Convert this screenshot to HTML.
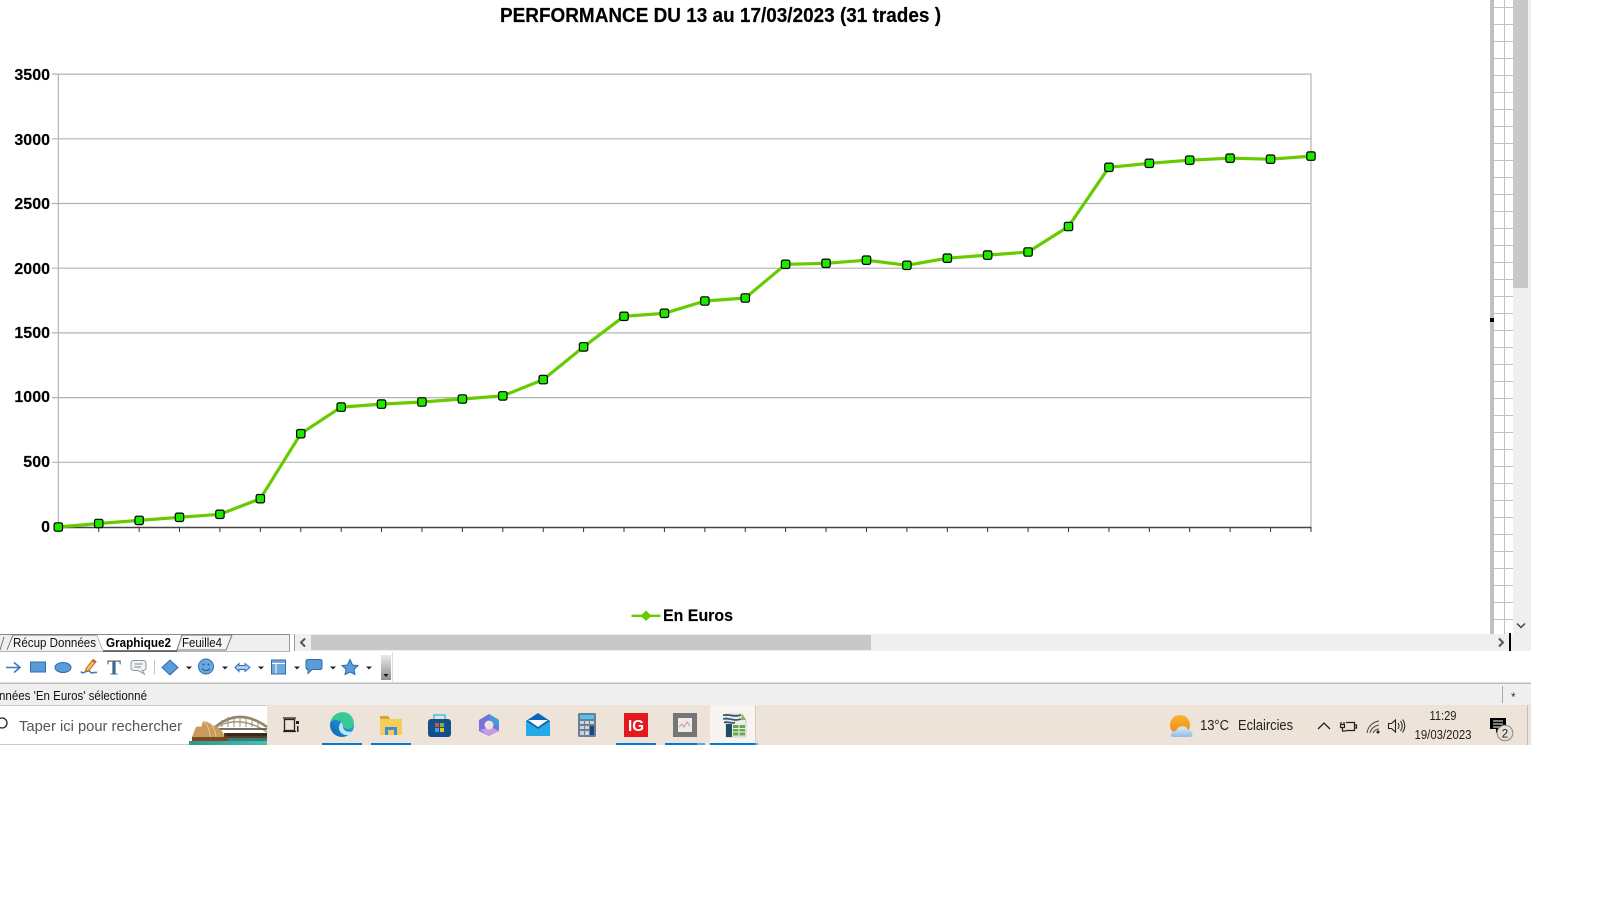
<!DOCTYPE html>
<html lang="fr">
<head>
<meta charset="utf-8">
<title>Performance</title>
<style>
html,body{margin:0;padding:0;background:#fff;width:1600px;height:900px;overflow:hidden}
svg{display:block}
text{font-family:"Liberation Sans",sans-serif}
</style>
</head>
<body>
<svg width="1600" height="900" viewBox="0 0 1600 900" xmlns="http://www.w3.org/2000/svg">
<defs>
<rect id="m" x="-4.2" y="-4.2" width="8.4" height="8.4" rx="1.8" fill="#1ee800" stroke="#000" stroke-width="1.2"/>
<linearGradient id="gg" x1="0" y1="0" x2="0" y2="1"><stop offset="0" stop-color="#e8e8e8"/><stop offset="1" stop-color="#8f8f8f"/></linearGradient>
<linearGradient id="sun" x1="0" y1="0" x2="0" y2="1"><stop offset="0" stop-color="#f9b52a"/><stop offset="1" stop-color="#f0851f"/></linearGradient>
<linearGradient id="cl" x1="0" y1="0" x2="0" y2="1"><stop offset="0" stop-color="#dcecf8"/><stop offset="1" stop-color="#8fbde6"/></linearGradient>
<linearGradient id="ed" x1="0" y1="1" x2="1" y2="0"><stop offset="0" stop-color="#0f5fb5"/><stop offset="1" stop-color="#2fb6e8"/></linearGradient>
<linearGradient id="wat" x1="0" y1="0" x2="1" y2="0"><stop offset="0" stop-color="#2a9a8c"/><stop offset="1" stop-color="#52b8b0"/></linearGradient>
</defs>
<rect width="1600" height="900" fill="#fff"/>

<!-- title -->
<text x="500" y="22" font-size="20" font-weight="bold" fill="#000" stroke="#000" stroke-width=".2" textLength="441" lengthAdjust="spacingAndGlyphs">PERFORMANCE DU 13 au 17/03/2023 (31 trades )</text>

<g transform="translate(58.3 0) scale(1.0007 1) translate(-58.3 0)">
<!-- grid -->
<g stroke="#b3b3b3" stroke-width="1.2" fill="none">
<path d="M58.3 74.1H1310.1V527M58.3 138.8H1310.1M58.3 203.5H1310.1M58.3 268.2H1310.1M58.3 332.9H1310.1M58.3 397.6H1310.1M58.3 462.3H1310.1M58.3 74.1V527"/>
<path d="M52 74.1H58M52 138.8H58M52 203.5H58M52 268.2H58M52 332.9H58M52 397.6H58M52 462.3H58"/>
</g>
<path d="M58 527.5H1310.5" stroke="#444" stroke-width="1.6"/>
<path d="M58.3 527V532M98.7 527V532M139.1 527V532M179.4 527V532M219.8 527V532M260.2 527V532M300.6 527V532M341 527V532M381.3 527V532M421.7 527V532M462.1 527V532M502.5 527V532M542.9 527V532M583.2 527V532M623.6 527V532M664 527V532M704.4 527V532M744.8 527V532M785.1 527V532M825.5 527V532M865.9 527V532M906.3 527V532M946.7 527V532M987 527V532M1027.4 527V532M1067.8 527V532M1108.2 527V532M1148.6 527V532M1188.9 527V532M1229.3 527V532M1269.7 527V532M1310.1 527V532" stroke="#333" stroke-width="1"/>
<!-- series -->
<polyline fill="none" stroke="#66cc00" stroke-width="3.2" stroke-linejoin="round" points="58.3,527 98.7,523.5 139.1,520.4 179.4,517.3 219.8,514.3 260.2,498.7 300.6,433.7 341,407.1 381.3,404.1 421.7,402 462.1,399 502.5,395.9 542.9,379.6 583.2,346.9 623.6,316.3 664,313.3 704.4,301 744.8,298 785.1,264.3 825.5,263.3 865.9,260.2 906.3,265.3 946.7,258.2 987,255.1 1027.4,252 1067.8,226.5 1108.2,167.3 1148.6,163.3 1188.9,160.2 1229.3,158.2 1269.7,159.2 1310.1,156.1"/>
<g>
<use href="#m" x="58.3" y="527"/><use href="#m" x="98.7" y="523.5"/><use href="#m" x="139.1" y="520.4"/><use href="#m" x="179.4" y="517.3"/><use href="#m" x="219.8" y="514.3"/><use href="#m" x="260.2" y="498.7"/><use href="#m" x="300.6" y="433.7"/><use href="#m" x="341" y="407.1"/><use href="#m" x="381.3" y="404.1"/><use href="#m" x="421.7" y="402"/><use href="#m" x="462.1" y="399"/><use href="#m" x="502.5" y="395.9"/><use href="#m" x="542.9" y="379.6"/><use href="#m" x="583.2" y="346.9"/><use href="#m" x="623.6" y="316.3"/><use href="#m" x="664" y="313.3"/><use href="#m" x="704.4" y="301"/><use href="#m" x="744.8" y="298"/><use href="#m" x="785.1" y="264.3"/><use href="#m" x="825.5" y="263.3"/><use href="#m" x="865.9" y="260.2"/><use href="#m" x="906.3" y="265.3"/><use href="#m" x="946.7" y="258.2"/><use href="#m" x="987" y="255.1"/><use href="#m" x="1027.4" y="252"/><use href="#m" x="1067.8" y="226.5"/><use href="#m" x="1108.2" y="167.3"/><use href="#m" x="1148.6" y="163.3"/><use href="#m" x="1188.9" y="160.2"/><use href="#m" x="1229.3" y="158.2"/><use href="#m" x="1269.7" y="159.2"/><use href="#m" x="1310.1" y="156.1"/>
</g>
</g>

<!-- y labels -->
<g font-size="16" font-weight="bold" fill="#000" stroke="#000" stroke-width=".15" text-anchor="end">
<text x="50" y="80">3500</text>
<text x="50" y="145">3000</text>
<text x="50" y="209">2500</text>
<text x="50" y="274">2000</text>
<text x="50" y="338">1500</text>
<text x="50" y="402">1000</text>
<text x="50" y="467">500</text>
<text x="50" y="532">0</text>
</g>

<!-- legend -->
<path d="M631.5 615.8H660.5" stroke="#66cc00" stroke-width="2.4"/>
<path d="M646 610.5L651.5 615.8L646 621L640.5 615.8Z" fill="#66cc00"/>
<text x="663" y="621" font-size="16.5" font-weight="bold" fill="#000" stroke="#000" stroke-width=".15" textLength="70" lengthAdjust="spacingAndGlyphs">En Euros</text>

<!-- right grid -->
<rect x="1490" y="0" width="4" height="634" fill="#c0c0c0"/>
<rect x="1490" y="318" width="4" height="4" fill="#000"/>
<path d="M1504.5 0V634" stroke="#c0c0c0"/>
<path stroke="#c0c0c0" d="M1494 7.5H1513M1494 24.5H1513M1494 41.5H1513M1494 58.5H1513M1494 75.5H1513M1494 92.5H1513M1494 109.5H1513M1494 126.5H1513M1494 143.5H1513M1494 160.5H1513M1494 177.5H1513M1494 194.5H1513M1494 211.5H1513M1494 228.5H1513M1494 245.5H1513M1494 262.5H1513M1494 279.5H1513M1494 296.5H1513M1494 313.5H1513M1494 330.5H1513M1494 347.5H1513M1494 364.5H1513M1494 381.5H1513M1494 398.5H1513M1494 415.5H1513M1494 432.5H1513M1494 449.5H1513M1494 466.5H1513M1494 483.5H1513M1494 500.5H1513M1494 517.5H1513M1494 534.5H1513M1494 551.5H1513M1494 568.5H1513M1494 585.5H1513M1494 602.5H1513M1494 619.5H1513"/>

<!-- v scrollbar -->
<rect x="1513" y="0" width="18" height="634" fill="#efefef"/>
<rect x="1513" y="0" width="15" height="288" fill="#c8c8c8"/>
<path d="M1517 623.5L1521 627.5L1525 623.5" fill="none" stroke="#444" stroke-width="1.5"/>

<!-- sheet tab bar -->
<rect x="0" y="634" width="1531" height="17" fill="#efefef"/>
<path d="M0 651.5H290" stroke="#b5b5b5"/>
<path d="M0 634.5H289" stroke="#8a8a8a"/>
<path d="M289.5 634V651M294.5 634V651" stroke="#999"/>
<rect x="290" y="635" width="4" height="16" fill="#fff"/>
<!-- tabs -->
<path d="M0 650L4 637" fill="none" stroke="#777"/>
<path d="M7 650L13 635H97L103 650" fill="#f4f4f4" stroke="#777"/>
<path d="M97 635L103 650H176L181 635" fill="#fff" stroke="none"/>
<path d="M103 651H177" stroke="#333" stroke-width="1.2"/>
<path d="M177 650L182 635H232L226 650Z" fill="#f4f4f4" stroke="#777"/>
<text x="13" y="647" font-size="12.5" fill="#111" textLength="83" lengthAdjust="spacingAndGlyphs">Récup Données</text>
<text x="106" y="647" font-size="12.5" font-weight="bold" fill="#000" textLength="65" lengthAdjust="spacingAndGlyphs">Graphique2</text>
<text x="182" y="647" font-size="12.5" fill="#111" textLength="40" lengthAdjust="spacingAndGlyphs">Feuille4</text>
<path d="M305 638.5L301 642.5L305 646.5" fill="none" stroke="#555" stroke-width="2"/>
<rect x="311" y="635" width="560" height="15" fill="#c8c8c8"/>
<path d="M1499 638.5L1503 642.5L1499 646.5" fill="none" stroke="#555" stroke-width="2"/>
<rect x="1509" y="633" width="2" height="18" fill="#000"/>

<!-- drawing toolbar -->
<rect x="0" y="652" width="1531" height="31" fill="#fff"/>
<path d="M0 683.5H1531" stroke="#bdbdbd" stroke-width="2"/>
<g transform="translate(0 -.5)">
<g stroke="#3b78c0" fill="#6fa8dc" stroke-width="1">
<path d="M6 668H19M14 663L20 668L14 673" fill="none" stroke-width="1.6"/>
<rect x="30.5" y="662.5" width="15" height="10" fill="#5b9bd8" stroke="#2f6cb0"/>
<ellipse cx="63" cy="668" rx="8" ry="5" fill="#5b9bd8" stroke="#2f6cb0"/>
<path d="M81 672C83 676 88 669 90 672C91 675 94 672 97 673" fill="none" stroke-width="1.5"/>
<path d="M86 669L93 660L96 662L89 671L85.5 672Z" fill="#f2c14e" stroke="#b5651d"/>
<path d="M92.5 661L95.5 663" stroke="#d9534f" stroke-width="2"/>
<path d="M162 668L170 660.500L178 668L170 675.500Z" fill="#5b9bd8" stroke="#2f6cb0"/>
<circle cx="206" cy="667" r="7.5" fill="#6fa8dc" stroke="#2f6cb0"/>
<path d="M202 669Q206 673 210 669" fill="none" stroke="#1f5a9e"/>
<circle cx="203.500" cy="665" r="1" fill="#1f5a9e" stroke="none"/><circle cx="208.500" cy="665" r="1" fill="#1f5a9e" stroke="none"/>
<path d="M235 668L239 664V666H245V664L250 668L245 672V670H239V672Z" fill="#a8cdf0" stroke="#2f6cb0"/>
<rect x="271.5" y="660.5" width="14" height="14" fill="#6fa8dc" stroke="#2f6cb0"/>
<path d="M272 664H285M276 664V674" stroke="#fff" fill="none"/>
<path d="M308 660H320Q322 660 322 662V668Q322 670 320 670H312L308 674V670Q306 670 306 668V662Q306 660 308 660Z" fill="#5b9bd8" stroke="#2f6cb0"/>
<path d="M350 660L352.5 665.5L358 666L354 670L355 675L350 672.5L345 675L346 670L342 666L347.500 665.500Z" fill="#5b9bd8" stroke="#2f6cb0"/>
</g>
<text x="107" y="675" font-size="21" font-weight="bold" fill="#3f6a8f" style="font-family:'Liberation Serif',serif">T</text>
<path d="M134 661H143Q146 661 146 664V668Q146 671 143 671H142L145 675L138 671H134Q131 671 131 668V664Q131 661 134 661Z" fill="#eef2f5" stroke="#8a9aa5"/>
<path d="M134.500 664.500H142.500M134.500 667.500H141" stroke="#7a8a95"/>
<path d="M154.500 660V675" stroke="#c4c4c4"/>
<g fill="#222"><path d="M186 667H192L189 670Z"/><path d="M222 667H228L225 670Z"/><path d="M258 667H264L261 670Z"/><path d="M294 667H300L297 670Z"/><path d="M330 667H336L333 670Z"/><path d="M366 667H372L369 670Z"/></g>
</g>
<rect x="381" y="655" width="10" height="25" fill="url(#gg)"/>
<path d="M383.500 674H388.500L386 677Z" fill="#111"/>
<path d="M392.500 652V682" stroke="#ddd"/>

<!-- status bar -->
<rect x="0" y="684" width="1531" height="21" fill="#efefef"/>
<text x="-1" y="700" font-size="12.500" fill="#111" textLength="148" lengthAdjust="spacingAndGlyphs">nnées 'En Euros' sélectionné</text>
<path d="M1502.500 686V703" stroke="#a9a9a9"/>
<text x="1511" y="701" font-size="12" fill="#333">*</text>

<!-- taskbar -->
<rect x="0" y="705" width="1531" height="40" fill="#eee3d8"/>
<rect x="0" y="705" width="267" height="40" fill="#fff"/>
<path d="M0 705.500H267M0 744.500H267" stroke="#ccc"/>
<circle cx="2" cy="723" r="5" fill="none" stroke="#222" stroke-width="1.300"/>
<text x="19" y="731" font-size="15" fill="#555" textLength="163" lengthAdjust="spacingAndGlyphs">Taper ici pour rechercher</text>
<!-- bridge picture -->
<path d="M213 729Q238 706 267 727" fill="none" stroke="#8d8468" stroke-width="2.500"/>
<path d="M213 729Q238 713 267 732" fill="none" stroke="#a89e80" stroke-width="1.500"/>
<path d="M218 729H267" stroke="#4a4030" stroke-width="1.500"/>
<path d="M222 727V720M228 727V717M234 727V716M240 727V716M246 727V717M252 727V718M258 727V720M264 727V723" stroke="#9a9070"/>
<rect x="224" y="733" width="43" height="7" fill="#5a3d24"/>
<path d="M226 733H267V736H226Z" fill="#3a2a1a"/>
<path d="M192 737L196 727C202 725 206 729 208 737ZM198 737L203 721C212 722 218 730 219 737ZM208 737L212 725C220 727 224 732 224 737Z" fill="#c99a5b"/>
<path d="M203 721C208 725 210 731 210 737M212 725C214 729 216 733 216 737" stroke="#e8c88c" fill="none"/>
<rect x="192" y="737" width="36" height="4" fill="#7a4a22"/>
<rect x="189" y="741" width="78" height="4" fill="url(#wat)"/>
<rect x="228" y="738" width="39" height="3" fill="#2f7f7a"/>

<!-- task view -->
<g stroke="#222" stroke-width="1.300" fill="none"><rect x="284.500" y="719.500" width="10" height="11"/><path d="M283 718H296M283 731.500H296"/></g>
<path d="M296 721H299V724H296ZM297 726H298.500V732H297Z" fill="#222"/>
<!-- edge -->
<circle cx="342" cy="725" r="12" fill="url(#ed)"/>
<path d="M330.500 722C333 711 347 709 352 717C355 722 354 728 349 729C345 729 342 727 343 723C339 719 333 719 330.500 722Z" fill="#37c99a"/>
<path d="M342 722C337 725 338 734 346 735C350 736 352 733 353 731C348 733 343 731 343 726Z" fill="#bfe6f7"/>
<!-- folder -->
<path d="M380 716H388L390 719H402V735H380Z" fill="#f6cd58"/>
<path d="M380 716H388L390 719H380Z" fill="#d9a52f"/>
<path d="M385 735V727H397V735H394V730H388V735Z" fill="#3a8fd8"/>
<!-- store -->
<rect x="428" y="719" width="23" height="18" rx="3" fill="#124f8c"/>
<path d="M434 719V715H445V719" fill="none" stroke="#3ec1f0" stroke-width="1.600"/>
<rect x="435" y="723" width="4" height="4" fill="#e8492f"/><rect x="440" y="723" width="4" height="4" fill="#7ab82f"/><rect x="435" y="728" width="4" height="4" fill="#2fa8e8"/><rect x="440" y="728" width="4" height="4" fill="#f6bb1e"/>
<!-- copilot -->
<path d="M489 714L499 720V731L489 736L479 731V720Z" fill="#7b6fd8"/>
<path d="M489 714L499 720V727L491 722Z" fill="#3a9fd8"/>
<path d="M480 730L489 736L499 731L491 727Z" fill="#c89ae8"/>
<circle cx="489" cy="725" r="4.500" fill="#eee3d8"/>
<!-- mail -->
<path d="M526 721L538 713L550 721V736H526Z" fill="#0a63b5"/>
<path d="M526 721L538 729L550 721V736H526Z" fill="#26a9e8"/>
<path d="M528 720H548L538 727Z" fill="#fff"/>
<!-- calc -->
<rect x="578" y="713" width="18" height="24" rx="1.500" fill="#6d7f90"/>
<rect x="580" y="715" width="14" height="4" fill="#4cc4ee"/>
<path d="M580 721H584V724H580ZM585 721H589V724H585ZM590 721H594V724H590ZM580 726H584V729H580ZM585 726H589V729H585ZM580 731H584V735H580ZM585 731H589V735H585Z" fill="#c9d4dc"/>
<rect x="590" y="726" width="4" height="9" fill="#174a80"/>
<!-- IG -->
<rect x="624" y="713" width="24" height="24" fill="#e2191f"/>
<text x="628" y="731" font-size="16" font-weight="bold" fill="#fff" textLength="16" lengthAdjust="spacingAndGlyphs">IG</text>
<!-- chart app -->
<rect x="673" y="713" width="24" height="24" fill="#767676"/>
<rect x="678" y="718" width="14" height="14" fill="#ececec"/>
<path d="M679 727L682 724L684 727L687 722L690 726" fill="none" stroke="#e39a9a" stroke-width="1.200"/>
<!-- active app -->
<rect x="710" y="705" width="45" height="40" fill="#f7f3ef"/>
<path d="M755.500 705V745" stroke="#d9cfc5"/>
<path d="M726 714H742L746 720V737H726Z" fill="#ececec" stroke="#b5b5b5" stroke-width=".6"/>
<path d="M723 715.500C728 713 733 718 741 715M723 719C729 717 733 722 741 719M724 722.500C729 721 731 724 735 722.500" stroke="#33556f" stroke-width="1.700" fill="none"/>
<rect x="726" y="724" width="6" height="13" fill="#1f4f66"/>
<rect x="733" y="725" width="12" height="10.500" fill="#6aa84f"/>
<path d="M733 728.500H745M733 732H745M739 725V735.500" stroke="#eef5e6"/>
<path d="M742 714L746 720H741Z" fill="#8ab648"/>
<!-- underlines -->
<g fill="#0078d4"><rect x="322" y="743" width="40" height="2"/><rect x="371" y="743" width="40" height="2"/><rect x="616" y="743" width="40" height="2"/><rect x="665" y="743" width="32" height="2"/><rect x="710" y="743" width="45" height="2"/></g>
<rect x="697" y="743" width="8" height="2" fill="#5ca8e0"/>
<rect x="755" y="743" width="3" height="2" fill="#5ca8e0"/>

<!-- tray -->
<circle cx="1180" cy="725" r="10" fill="url(#sun)"/>
<path d="M1173 737C1169 737 1171 730 1176 731C1178 725 1187 725 1188 730C1193 730 1194 737 1190 737Z" fill="url(#cl)"/>
<text x="1200" y="730" font-size="14.500" fill="#222" textLength="29" lengthAdjust="spacingAndGlyphs">13°C</text>
<text x="1238" y="730" font-size="14.500" fill="#222" textLength="55" lengthAdjust="spacingAndGlyphs">Eclaircies</text>
<path d="M1318 729L1324 723L1330 729" fill="none" stroke="#222" stroke-width="1.300"/>
<path d="M1346 722.500H1354.500V730.500H1346M1355 725H1356.500V728H1355" fill="none" stroke="#222" stroke-width="1.200"/>
<path d="M1341 724V722M1344 724V722M1340.500 724.500H1344.500V727.500H1340.500ZM1342.500 728V731H1346" fill="none" stroke="#222" stroke-width="1.200"/>
<path d="M1367 733C1368 726 1373 722 1379 721M1370 733C1371 729 1374 726 1379 725M1373 733C1374 731 1376 729 1379 729" fill="none" stroke="#444" stroke-width="1"/>
<circle cx="1378" cy="732" r="1.500" fill="#222"/>
<path d="M1388.500 723.500H1391.500L1395.500 720V732L1391.500 728.500H1388.500Z" fill="none" stroke="#222" stroke-width="1.100"/>
<path d="M1398 723Q1400 726 1398 729M1400.500 721Q1404 726 1400.500 731M1402.500 719.500Q1407 726 1402.500 732.500" fill="none" stroke="#222" stroke-width="1"/>
<text x="1443" y="720" font-size="12.500" fill="#222" text-anchor="middle" textLength="27" lengthAdjust="spacingAndGlyphs">11:29</text>
<text x="1443" y="739" font-size="12.500" fill="#222" text-anchor="middle" textLength="57" lengthAdjust="spacingAndGlyphs">19/03/2023</text>
<path d="M1490 718H1506V729H1500L1496 733V729H1490Z" fill="#000"/>
<path d="M1493 721H1503M1493 724H1503M1493 727H1500" stroke="#fff"/>
<circle cx="1505" cy="733" r="7.800" fill="#e6dfd8" stroke="#888" stroke-width="1"/>
<text x="1505" y="737.500" font-size="11.500" fill="#222" text-anchor="middle">2</text>
<path d="M1527.500 705V745" stroke="#c9beb3"/>
</svg>
</body>
</html>
